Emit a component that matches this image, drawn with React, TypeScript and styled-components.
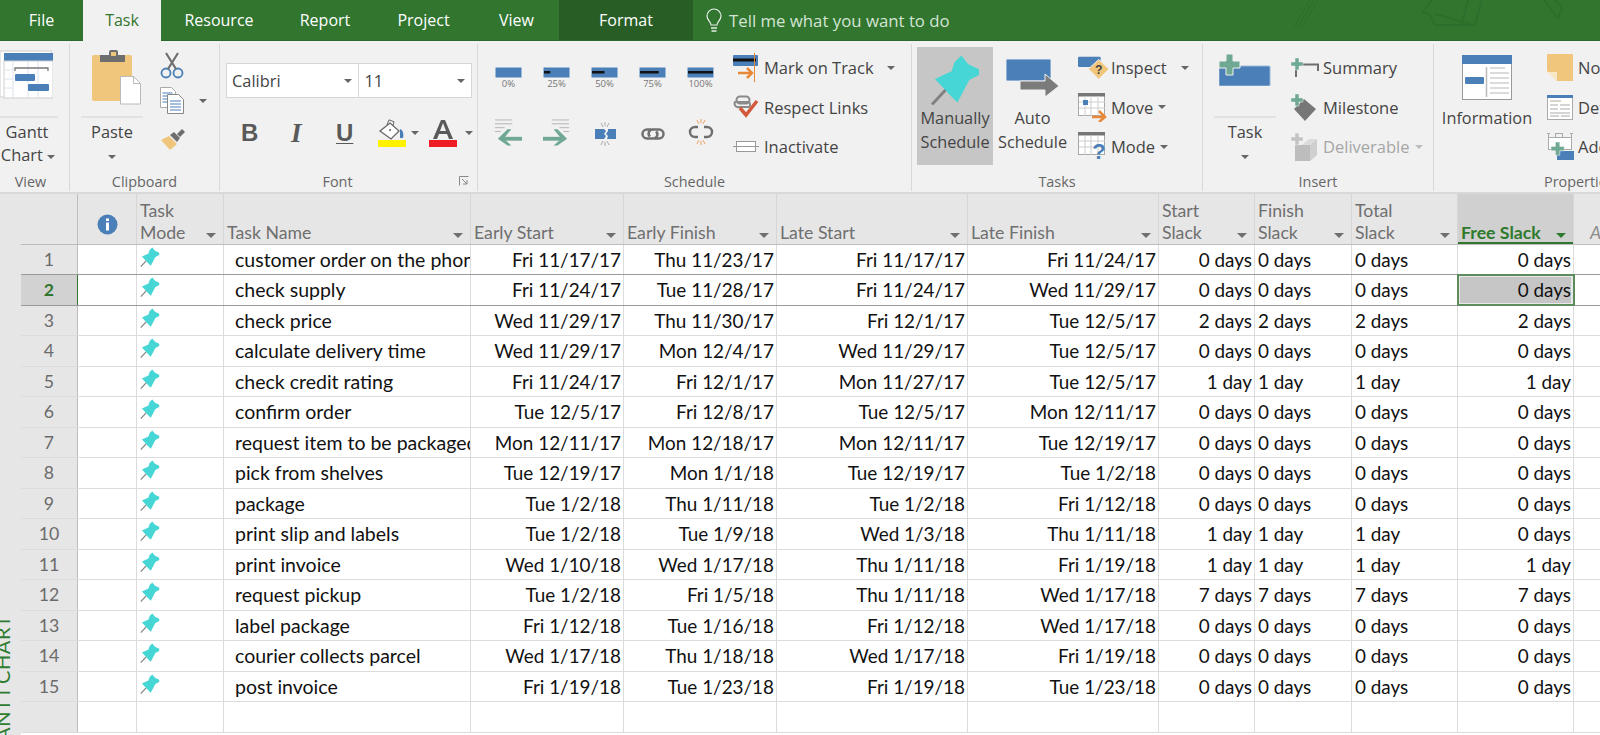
import React from "react";
import styled, { createGlobalStyle } from "styled-components";

const Global = createGlobalStyle`
  html, body { margin: 0; padding: 0; background: #fff; }
  body { font-family: "Open Sans", "Liberation Sans", sans-serif; }
`;

const GREEN = "#31752f";
const BLUE = "#4a7fb8";
const TEAL = "#47d6d6";
const SAGE = "#6fa893";
const ORANGE = "#e8893a";
const COLS = "57px 59px 87px 247px 153px 153px 191px 191px 96px 97px 106px 116px 27px";

const Page = styled.div`
  width: 1600px;
  height: 735px;
  overflow: hidden;
  display: flex;
  flex-direction: column;
  background: #fff;
`;

/* ---------- tab bar ---------- */
const TabBar = styled.div`
  position: relative;
  flex: none;
  height: 41px;
  display: flex;
  background: ${GREEN};
  border-bottom: 1px solid #2c6a2b;
  box-sizing: border-box;
`;
const Tab = styled.div<{ $w: number; $active?: boolean; $ctx?: boolean }>`
  width: ${(p) => p.$w}px;
  flex: none;
  display: flex;
  align-items: center;
  justify-content: center;
  font-size: 16px;
  box-sizing: border-box;
  color: ${(p) => (p.$active ? GREEN : "#fff")};
  background: ${(p) => (p.$active ? "#f1f1f1" : p.$ctx ? "#285e25" : "transparent")};
  height: ${(p) => (p.$active ? "42px" : "40px")};
  padding-bottom: ${(p) => (p.$active ? "2px" : "0")};
  position: relative;
`;
const TellMe = styled.div`
  display: flex;
  align-items: center;
  gap: 7px;
  margin-left: 13px;
  color: #d5e4d4;
  font-size: 16.8px;
  padding-top: 1px;
`;
const Decor = styled.svg`
  position: absolute;
  right: 0;
  top: 0;
`;

/* ---------- ribbon ---------- */
const Ribbon = styled.div`
  flex: none;
  height: 153px;
  box-sizing: border-box;
  display: flex;
  background: #f1f1f1;
  padding-top: 3px;
  border-bottom: 2px solid #d9d9d9;
  color: #444;
`;
const Group = styled.div<{ $w: number }>`
  flex: none;
  width: ${(p) => p.$w}px;
  box-sizing: border-box;
  border-right: 1px solid #d9d9d9;
  display: flex;
  flex-direction: column;
  margin-bottom: 1px;
`;
const GroupBody = styled.div<{ $pl?: number }>`
  flex: 1;
  min-height: 0;
  display: flex;
  padding-left: ${(p) => p.$pl ?? 0}px;
`;
const GroupLabel = styled.div<{ $pr?: number; $left?: number }>`
  flex: none;
  position: relative;
  height: 18px;
  line-height: 18px;
  text-align: ${(p) => (p.$left !== undefined ? "left" : "center")};
  padding-left: ${(p) => p.$left ?? 0}px;
  padding-right: ${(p) => p.$pr ?? 0}px;
  font-size: 14.4px;
  color: #666;
`;
const Launcher = styled.svg`
  position: absolute;
  right: 8px;
  top: 3px;
`;
const BigSplit = styled.div<{ $w: number }>`
  flex: none;
  width: ${(p) => p.$w}px;
  display: flex;
  flex-direction: column;
  align-items: center;
  font-size: 16.4px;
  line-height: 23px;
  text-align: center;
`;
const BigIconSlot = styled.div<{ $pb: number; $pl?: number; $pr?: number }>`
  flex: none;
  height: 74px;
  width: 100%;
  display: flex;
  justify-content: center;
  align-items: flex-end;
  padding: 0 ${(p) => p.$pr ?? 0}px ${(p) => p.$pb}px ${(p) => p.$pl ?? 0}px;
  box-sizing: border-box;
  border-bottom: 2px solid #e2e2e2;
`;
const BigText = styled.div<{ $pt?: number; $shift?: number }>`
  flex: none;
  padding-top: ${(p) => p.$pt ?? 0}px;
  white-space: nowrap;
  margin-right: ${(p) => p.$shift ?? 0}px;
`;
const DropDown = styled.span<{ $c?: string; $ml?: number }>`
  display: inline-block;
  flex: none;
  width: 0;
  height: 0;
  border-left: 4px solid transparent;
  border-right: 4px solid transparent;
  border-top: 4px solid ${(p) => p.$c ?? "#666"};
  vertical-align: middle;
  margin-left: ${(p) => p.$ml ?? 0}px;
`;
const BigDrop = styled.div`
  flex: none;
  line-height: 23px;
`;
const BigButton = styled.div<{ $w: number; $on?: boolean }>`
  flex: none;
  width: ${(p) => p.$w}px;
  height: 118px;
  margin-top: 3px;
  display: flex;
  flex-direction: column;
  align-items: center;
  background: ${(p) => (p.$on ? "#c6c6c6" : "transparent")};
  font-size: 16.3px;
  line-height: 24px;
  text-align: center;
  white-space: nowrap;
`;
const BigButtonIcon = styled.div<{ $h: number; $pt: number }>`
  flex: none;
  height: ${(p) => p.$h}px;
  padding-top: ${(p) => p.$pt}px;
`;
const CmdColumn = styled.div<{ $ml: number }>`
  flex: none;
  margin-left: ${(p) => p.$ml}px;
  padding-top: 4px;
  display: flex;
  flex-direction: column;
`;
const Cmd = styled.div<{ $off?: boolean }>`
  flex: none;
  height: 39.5px;
  display: flex;
  align-items: center;
  font-size: 16.5px;
  white-space: nowrap;
  color: ${(p) => (p.$off ? "#a6a6a6" : "#444")};
`;
const CmdIcon = styled.div<{ $w: number }>`
  flex: none;
  width: ${(p) => p.$w}px;
  display: flex;
  align-items: center;
`;
const ProgressGrid = styled.div`
  flex: none;
  width: 238px;
  margin-left: 17px;
  display: grid;
  grid-template-columns: repeat(5, 27px);
  column-gap: 21px;
  grid-template-rows: 49px 60px;
  padding-top: 23px;
  align-items: start;
`;
const Progress = styled.div`
  display: flex;
  flex-direction: column;
  align-items: center;
  font-size: 9.5px;
  line-height: 11px;
  color: #777;
  white-space: nowrap;
`;
const GlyphCell = styled.div`
  padding-top: 3px;
  display: flex;
  justify-content: center;
`;
const FontPanel = styled.div`
  display: flex;
  flex-direction: column;
  padding: 19px 0 0 6px;
`;
const ComboRow = styled.div`
  flex: none;
  display: flex;
  height: 35px;
  background: #fff;
  width: 246px;
  box-sizing: border-box;
  border: 1px solid #d6d6d6;
`;
const Combo = styled.div<{ $w: number }>`
  width: ${(p) => p.$w}px;
  box-sizing: border-box;
  display: flex;
  align-items: center;
  justify-content: space-between;
  padding: 0 6px 0 5px;
  font-size: 16.4px;
  color: #444;
  border-right: 1px solid #d6d6d6;
  &:last-child { border-right: 0; }
`;
const FormatRow = styled.div`
  flex: none;
  display: flex;
  align-items: center;
  height: 28px;
  margin-top: 21px;
  padding-left: 15px;
`;
const FormatGlyph = styled.span<{ $w: number; $i?: boolean; $u?: boolean }>`
  width: ${(p) => p.$w}px;
  flex: none;
  font-family: ${(p) => (p.$i ? '"Liberation Serif", serif' : '"Liberation Sans", sans-serif')};
  font-size: ${(p) => (p.$i ? 27 : 24)}px;
  line-height: 24px;
  color: #595959;
  font-weight: 700;
  font-style: ${(p) => (p.$i ? "italic" : "normal")};
  text-decoration: ${(p) => (p.$u ? "underline" : "none")};
  text-underline-offset: 2px;
  text-decoration-thickness: 1px;
`;
const Swatch = styled.div<{ $w: number; $ml?: number }>`
  width: ${(p) => p.$w}px;
  margin-left: ${(p) => p.$ml ?? 0}px;
  flex: none;
  display: flex;
  align-items: center;
`;
const ClipColumn = styled.div`
  flex: none;
  margin-left: 17px;
  padding-top: 8px;
  display: flex;
  flex-direction: column;
  gap: 8px;
`;
const ClipItem = styled.div<{ $mt?: number }>`
  flex: none;
  display: flex;
  align-items: center;
  gap: 15px;
  height: 27px;
  margin-top: ${(p) => p.$mt ?? 0}px;
`;

/* ---------- sheet ---------- */
const Sheet = styled.div`
  flex: 1;
  min-height: 0;
  display: flex;
`;
const Rail = styled.div`
  flex: none;
  width: 21px;
  background: #e6e6e6;
  overflow: hidden;
  position: relative;
`;
const RailText = styled.div`
  position: absolute;
  left: -8px;
  top: 402px;
  height: 160px;
  writing-mode: vertical-rl;
  transform: rotate(180deg);
  font-family: "Lato", sans-serif;
  font-size: 20px;
  line-height: 20px;
  letter-spacing: 0.6px;
  word-spacing: -3px;
  color: #2f7d2f;
  white-space: nowrap;
`;
const Grid = styled.div`
  flex: none;
  width: 1579px;
`;
const HeaderRow = styled.div`
  display: grid;
  grid-template-columns: ${COLS};
  height: 50px;
  background: #e6e6e6;
  border-bottom: 1px solid #bdbdbd;
`;
const HeadCell = styled.div<{ $sel?: boolean }>`
  display: flex;
  align-items: flex-end;
  justify-content: space-between;
  padding: 0 7px 0 3px;
  min-width: 0;
  overflow: hidden;
  box-sizing: border-box;
  border-right: 1px solid #d6d6d6;
  background: ${(p) => (p.$sel ? "#d0d0d0" : "transparent")};
  box-shadow: ${(p) => (p.$sel ? `inset 0 -2px 0 ${GREEN}` : "none")};
  font-family: "Lato", sans-serif;
  font-size: 17.7px;
  line-height: 22px;
  color: ${(p) => (p.$sel ? "#2e7a2c" : "#6f6f6f")};
  font-weight: ${(p) => (p.$sel ? 700 : 400)};
`;
const HeadLabel = styled.span`
  white-space: pre-line;
`;
const Arrow = styled.span`
  flex: none;
  width: 0;
  height: 0;
  margin-bottom: 6px;
  border-left: 5px solid transparent;
  border-right: 5px solid transparent;
  border-top: 5px solid currentColor;
`;
const GhostHead = styled.div`
  display: flex;
  align-items: flex-end;
  padding: 0 0 0 16px;
  overflow: hidden;
  white-space: nowrap;
  font-family: "Lato", sans-serif;
  font-style: italic;
  font-size: 17.7px;
  line-height: 22px;
  color: #8c8c8c;
`;
const InfoSlot = styled.div`
  display: flex;
  align-items: center;
  justify-content: center;
  padding-top: 10px;
  box-sizing: border-box;
  border-right: 1px solid #d6d6d6;
`;
const HeadBlank = styled.div`
  border-right: 1px solid #bdbdbd;
`;
const Row = styled.div<{ $cur?: boolean }>`
  position: relative;
  display: grid;
  grid-template-columns: ${COLS};
  height: 30.48px;
  box-sizing: border-box;
  border-bottom: 1px solid ${(p) => (p.$cur ? "#9a9a9a" : "#dcdcdc")};
  ${(p) => (p.$cur ? "box-shadow: 0 -1px 0 #9a9a9a;" : "")}
`;
const NumCell = styled.div<{ $cur?: boolean }>`
  background: ${(p) => (p.$cur ? "#d2d2d2" : "#e6e6e6")};
  color: ${(p) => (p.$cur ? GREEN : "#6b6b6b")};
  font-weight: ${(p) => (p.$cur ? 700 : 400)};
  font-family: "Lato", sans-serif;
  font-size: 17.7px;
  text-align: center;
  line-height: 29px;
  border-right: ${(p) => (p.$cur ? `1px solid ${GREEN}` : "1px solid #bdbdbd")};
  box-sizing: border-box;
`;
const Cell = styled.div<{ $align?: string; $indent?: number; $sel?: boolean; $size?: number }>`
  min-width: 0;
  overflow: hidden;
  white-space: nowrap;
  box-sizing: border-box;
  border-right: 1px solid #dcdcdc;
  font-family: "Lato", sans-serif;
  font-size: ${(p) => p.$size ?? 18.9}px;
  line-height: 29px;
  color: #111;
  text-align: ${(p) => p.$align ?? "right"};
  padding: 0 2px 0 ${(p) => p.$indent ?? 3}px;
  ${(p) => (p.$sel ? `
    background: #c6c6c6;
    outline: 2px solid #5d8c5d;
    outline-offset: -1px;
    box-shadow: inset 0 0 0 2px #e9e9e9;
    position: relative;
  ` : "")}
`;
const ModeCell = styled.div`
  padding: 2px 0 0 3px;
  box-sizing: border-box;
  border-right: 1px solid #dcdcdc;
`;

/* ---------- icons ---------- */
const PIN_BODY = "M30 0 37 9 48 14 48 20 38 25 26 48 20 42 3 24 20 16 23 7Z";
const Pin = ({ w, h }: { w: number; h: number }) => (
  <svg width={w} height={h} viewBox="-1 -1 50 52">
    <path d="M0 50 14 35" stroke="#808080" strokeWidth="3" fill="none" />
    <path d={PIN_BODY} fill={TEAL} />
  </svg>
);
const GanttIcon = () => (
  <svg width="53" height="49" viewBox="0 0 53 49">
    <rect x="0" y="1" width="51" height="46" fill="#fff" stroke="#d0d0d0" />
    <rect x="4" y="3" width="49" height="8" fill={BLUE} />
    <rect x="4" y="11" width="49" height="37" fill="#fff" stroke="#cfcfcf" />
    <path d="M13 11v37M28 11v37M38 11v37M4 20h9M4 29h9M4 38h9" stroke="#dbe4ee" fill="none" />
    <path d="M15 21v-3h33v3" stroke="#777" strokeWidth="1.3" fill="none" />
    <rect x="15" y="24" width="20" height="7" rx="1" fill={BLUE} />
    <rect x="28" y="34" width="21" height="7" rx="1" fill={BLUE} />
  </svg>
);
const PasteIcon = () => (
  <svg width="50" height="56" viewBox="0 0 50 56">
    <rect x="0" y="6" width="40" height="46" rx="2" fill="#efc67c" />
    <path d="M8 6h9V3a2 2 0 0 1 2-2h5a2 2 0 0 1 2 2v3h7v7H8Z" fill="#6e6e6e" />
    <rect x="19" y="3" width="5" height="4" fill="#efc67c" />
    <path d="M28.5 27.5h13l7 7v20.5h-20Z" fill="#fff" stroke="#bbb" />
    <path d="M41.500 27.500v7h7" fill="none" stroke="#bbb" />
  </svg>
);
const ScissorsIcon = () => (
  <svg width="24" height="27" viewBox="0 0 24 27">
    <circle cx="6" cy="21" r="4.500" fill="none" stroke={BLUE} strokeWidth="1.800" />
    <circle cx="18" cy="21" r="4.500" fill="none" stroke={BLUE} strokeWidth="1.800" />
    <path d="M8 17 18 1M16 17 6 1" stroke="#6e6e6e" strokeWidth="2.200" fill="none" />
  </svg>
);
const CopyIcon = () => (
  <svg width="24" height="27" viewBox="0 0 24 27">
    <path d="M.5.500h11l4 4v16H.5Z" fill="#fff" stroke="#aaa" />
    <path d="M2.500 6h10M2.500 9h10M2.500 12h10M2.500 15h10" stroke={BLUE} />
    <path d="M7.500 7.500h11l5 5v14h-16Z" fill="#fff" stroke="#888" />
    <path d="M10 14h11M10 17h11M10 20h11M10 23h11" stroke={BLUE} />
  </svg>
);
const BrushIcon = () => (
  <svg width="26" height="22" viewBox="0 0 26 22">
    <path d="M9 7 17 15 10 21 1 11Z" fill="#efc67c" />
    <path d="M10 6 14 3 20 9 17 13Z" fill="#6e6e6e" />
    <path d="M17 5 22 0 25 3 20 8Z" fill="#6e6e6e" />
  </svg>
);
const FillIcon = () => (
  <svg width="30" height="28" viewBox="0 0 30 28">
    <path d="M3 12 13 4 22 12 14 20Z" fill="#fff" stroke="#666" strokeWidth="1.300" />
    <path d="M10 6 12 0.800l5 2-1 4" fill="none" stroke="#666" />
    <circle cx="13" cy="11" r="1" fill="#666" />
    <path d="M23 10c3 1 4 5 3 9h-3Z" fill={BLUE} />
    <rect x="1" y="21" width="28" height="7" fill="#fff200" />
  </svg>
);
const FontColorIcon = () => (
  <svg width="30" height="28" viewBox="0 0 30 28">
    <path d="M5 20 13 1h4l8 19h-4l-2-5h-8l-2 5Zm7-8h6l-3-8Z" fill="#595959" />
    <rect x="1" y="21" width="28" height="7" fill="#ee1c25" />
  </svg>
);
const Bar = ({ pct }: { pct: number }) => (
  <svg width="27" height="11" viewBox="0 0 27 11">
    <rect x=".5" y=".5" width="26" height="10" rx="1" fill={BLUE} stroke="#9db9d6" />
    {pct > 0 && <rect x="1" y="4" width={25 * pct} height="2.500" fill="#111" />}
  </svg>
);
const ArrowGlyph = ({ dir }: { dir: "l" | "r" }) => (
  <svg width="28" height="27" viewBox="0 0 28 27">
    <g stroke="#b4b4b4" fill="none">
      {dir === "l"
        ? <path d="M0 .500h18M0 4.500h18M0 8.500h10M0 12.500h6" />
        : <path d="M9 .500h18M9 4.500h18M17 8.500h10M21 12.500h6" />}
    </g>
    <g transform={dir === "l" ? "" : "translate(28 0) scale(-1 1)"}>
      <path d="M8 18h20v4H8Z" fill={SAGE} />
      <path d="M13 10 3 20 13 27h4l-8-7 8-10Z" fill={SAGE} />
    </g>
  </svg>
);
const SplitTask = () => (
  <svg width="24" height="24" viewBox="0 0 24 24" style={{ marginTop: 3 }}>
    <path d="M2 7h9l2 2-2 3 2 2-2 3H2Z M15 7h8v10h-9l1-3-2-2 2-3Z" fill={BLUE} />
    <path d="M8 1l2 4M16 1l-2 4M12 0v4M8 23l2-4M16 23l-2-4M12 24v-4" stroke="#aaa" fill="none" />
  </svg>
);
const LinkIcon = () => (
  <svg width="24" height="14" viewBox="0 0 24 14" style={{ marginTop: 8 }}>
    <path d="M10 2.500H6a4.500 4.500 0 0 0 0 9h6a4 4 0 0 0 3-7" fill="none" stroke="#707070" strokeWidth="2.500" />
    <path d="M14 11.500h4a4.500 4.500 0 0 0 0-9h-6a4 4 0 0 0-3 7" fill="none" stroke="#707070" strokeWidth="2.500" />
  </svg>
);
const UnlinkIcon = () => (
  <svg width="26" height="26" viewBox="0 0 26 26">
    <path d="M10 8H7a5 5 0 0 0 0 10h3M16 8h3a5 5 0 0 1 0 10h-3" fill="none" stroke="#707070" strokeWidth="2.500" />
    <path d="M9 1l2 4M17 1l-2 4M13 0v4M9 25l2-4M17 25l-2-4M13 26v-4" stroke={ORANGE} fill="none" opacity=".75" />
  </svg>
);
const MarkTrack = () => (
  <svg width="26" height="29" viewBox="0 0 26 29">
    <rect x="0" y="2" width="25" height="11" rx="1" fill={BLUE} />
    <rect x="0" y="5.500" width="23" height="3" fill="#111" />
    <path d="M21.500 0v29" stroke={ORANGE} />
    <path d="M5 20h13" stroke={ORANGE} strokeWidth="2.500" />
    <path d="M14 15l5 5-5 5" stroke={ORANGE} strokeWidth="2.500" fill="none" />
  </svg>
);
const RespectIcon = () => (
  <svg width="26" height="24" viewBox="0 0 26 24">
    <path d="M7 1.500h6a3.500 3.500 0 0 1 0 7H7a3.500 3.500 0 0 1 0-7Z" fill="none" stroke="#8a8a8a" strokeWidth="2" />
    <path d="M2 7h14a3.500 3.500 0 0 1 0 5H6A3.500 3.500 0 0 1 2 7Z" fill="none" stroke="#8a8a8a" strokeWidth="2" />
    <path d="M7 13l6 7L24 6" fill="none" stroke="#d4583a" strokeWidth="3.500" />
  </svg>
);
const InactIcon = () => (
  <svg width="26" height="11" viewBox="0 0 26 11">
    <rect x="3.500" y=".5" width="19" height="10" fill="#fff" stroke="#999" />
    <path d="M0 5.500h26" stroke="#999" />
  </svg>
);
const AutoIcon = () => (
  <svg width="53" height="38" viewBox="0 0 53 38">
    <rect x=".5" y=".5" width="44" height="21" rx="1" fill={BLUE} stroke="#8fb0d3" />
    <path d="M14 22h25V15l14 12-14 11v-7H14Z" fill="#7b7b7b" stroke="#f1f1f1" strokeWidth="1" />
  </svg>
);
const InspectIcon = () => (
  <svg width="35" height="24" viewBox="0 0 35 24">
    <rect x="0" y="0" width="24" height="11" rx="1" fill={BLUE} />
    <path d="M22 3 33 13 22 24 11 13Z" fill="#efc67c" stroke="#f1f1f1" />
    <text x="22" y="18" textAnchor="middle" fontSize="13" fontWeight="700" fontFamily="Liberation Sans" fill="#444">?</text>
  </svg>
);
const CalIcon = ({ kind }: { kind: "move" | "mode" }) => (
  <svg width="30" height="29" viewBox="0 0 30 29">
    <rect x=".5" y=".5" width="26" height="22" fill="#fff" stroke="#a8a8a8" />
    <rect x="0" y="0" width="27" height="3.500" fill="#777" />
    <path d="M7 3v20M13 3v20M20 3v20M1 9h26M1 15h26" stroke="#cfcfcf" fill="none" />
    {kind === "move" && <rect x="5" y="7" width="5" height="5" fill={BLUE} />}
    {kind === "move" && <path d="M14 24h12M21 18l6 6-6 5" stroke={ORANGE} strokeWidth="2.500" fill="none" />}
    {kind === "mode" && <text x="21" y="27" textAnchor="middle" fontSize="22" fontWeight="700" fontFamily="Liberation Sans" fill={BLUE}>?</text>}
  </svg>
);
const TaskAddIcon = () => (
  <svg width="52" height="32" viewBox="0 0 52 32">
    <rect x="0" y="12" width="51" height="20" rx="1" fill={BLUE} stroke="#9db9d6" />
    <path d="M7 0h7v7h7v7h-7v7H7v-7H0V7h7Z" fill={SAGE} stroke="#f1f1f1" />
  </svg>
);
const Plus = ({ c = SAGE }: { c?: string }) => (
  <path d="M4 0h4v4h4v4H8v4H4V8H0V4h4Z" fill={c} stroke="#f1f1f1" strokeWidth=".5" />
);
const SummaryIcon = () => (
  <svg width="28" height="20" viewBox="0 0 28 20">
    <path d="M8 6.500h19V13" stroke="#6e6e6e" strokeWidth="2" fill="none" />
    <path d="M5 12v7" stroke="#6e6e6e" strokeWidth="2" />
    <Plus />
  </svg>
);
const MilestoneIcon = () => (
  <svg width="26" height="27" viewBox="0 0 26 27">
    <path d="M13 5 25 15 14 27 3 15Z" fill="#777" />
    <Plus />
  </svg>
);
const DeliverIcon = () => (
  <svg width="27" height="28" viewBox="0 0 27 28">
    <path d="M4 12h15v16H4Z" fill="#bdbdbd" />
    <path d="M19 12l7-6v16l-7 6Z" fill="#cfcfcf" />
    <path d="M11 12l7-6h8l-7 6Z" fill="#dcdcdc" />
    <Plus c="#c4c4c4" />
  </svg>
);
const InfoIcon = () => (
  <svg width="50" height="46" viewBox="0 0 50 46">
    <rect x=".5" y=".5" width="49" height="44" fill="#fff" stroke="#9a9a9a" />
    <rect x="0" y="0" width="50" height="9" fill={BLUE} />
    <path d="M24.500 12v30" stroke="#bbb" strokeWidth="1.500" />
    <rect x="3" y="22" width="19" height="7" rx="1" fill={BLUE} />
    <path d="M28 13h15M28 18h19M28 23h19M28 28h19M28 33h19M28 38h19" stroke="#d0d0d0" strokeWidth="1.300" />
  </svg>
);
const NoteIcon = () => (
  <svg width="27" height="28" viewBox="0 0 27 28">
    <path d="M0 0h26v27H10L0 17Z" fill="#efc67c" />
    <path d="M0 18h10v9Z" fill="#f7e8c8" />
  </svg>
);
const DetailIcon = () => (
  <svg width="27" height="25" viewBox="0 0 27 25">
    <rect x=".5" y=".5" width="25" height="24" fill="#fff" stroke="#aaa" />
    <rect x="0" y="0" width="26" height="3" fill={BLUE} />
    <path d="M3 6h11M3 10h8M13 10h10M3 14h8M13 14h10M3 18h20M3 21h9M14 21h9" stroke="#aaa" />
  </svg>
);
const AddIcon = () => (
  <svg width="27" height="27" viewBox="0 0 27 27">
    <path d="M0 .500h3M9 .500h7M23 .500h3M1.500 0v4M8.500 0v4M15.500 0v4M24.500 0v4" stroke="#aaa" fill="none" />
    <rect x="1.500" y="4.500" width="23" height="12" fill="#fff" stroke="#aaa" />
    <rect x="10" y="18" width="17" height="9" fill={BLUE} />
    <path transform="translate(4 9) scale(1.100)" d="M4 0h4v4h4v4H8v4H4V8H0V4h4Z" fill={SAGE} stroke="#f1f1f1" strokeWidth=".5" />
  </svg>
);
const Bulb = () => (
  <svg width="16" height="26" viewBox="0 0 16 26">
    <path d="M5 17c0-3-4-5-4-9a7 7 0 0 1 14 0c0 4-4 6-4 9Z" fill="none" stroke="#e8efe8" strokeWidth="1.200" />
    <path d="M5 20h6M5.500 23h5" stroke="#e8efe8" strokeWidth="1.300" />
  </svg>
);
const InfoBadge = () => (
  <svg width="21" height="21" viewBox="0 0 21 21">
    <circle cx="10.500" cy="10.500" r="10" fill={BLUE} />
    <rect x="9" y="8.500" width="3" height="8" fill="#fff" />
    <rect x="9" y="4.500" width="3" height="2.500" fill="#fff" />
  </svg>
);

/* ---------- data ---------- */
type TaskRow = [string, string, string, string, string, string, string, string, string];
const d0 = "0 days", d1 = "1 day", d2 = "2 days", d7 = "7 days";
const tasks: TaskRow[] = [
  ["customer order on the phone", "Fri 11/17/17", "Thu 11/23/17", "Fri 11/17/17", "Fri 11/24/17", d0, d0, d0, d0],
  ["check supply", "Fri 11/24/17", "Tue 11/28/17", "Fri 11/24/17", "Wed 11/29/17", d0, d0, d0, d0],
  ["check price", "Wed 11/29/17", "Thu 11/30/17", "Fri 12/1/17", "Tue 12/5/17", d2, d2, d2, d2],
  ["calculate delivery time", "Wed 11/29/17", "Mon 12/4/17", "Wed 11/29/17", "Tue 12/5/17", d0, d0, d0, d0],
  ["check credit rating", "Fri 11/24/17", "Fri 12/1/17", "Mon 11/27/17", "Tue 12/5/17", d1, d1, d1, d1],
  ["confirm order", "Tue 12/5/17", "Fri 12/8/17", "Tue 12/5/17", "Mon 12/11/17", d0, d0, d0, d0],
  ["request item to be packaged", "Mon 12/11/17", "Mon 12/18/17", "Mon 12/11/17", "Tue 12/19/17", d0, d0, d0, d0],
  ["pick from shelves", "Tue 12/19/17", "Mon 1/1/18", "Tue 12/19/17", "Tue 1/2/18", d0, d0, d0, d0],
  ["package", "Tue 1/2/18", "Thu 1/11/18", "Tue 1/2/18", "Fri 1/12/18", d0, d0, d0, d0],
  ["print slip and labels", "Tue 1/2/18", "Tue 1/9/18", "Wed 1/3/18", "Thu 1/11/18", d1, d1, d1, d0],
  ["print invoice", "Wed 1/10/18", "Wed 1/17/18", "Thu 1/11/18", "Fri 1/19/18", d1, d1, d1, d1],
  ["request pickup", "Tue 1/2/18", "Fri 1/5/18", "Thu 1/11/18", "Wed 1/17/18", d7, d7, d7, d7],
  ["label package", "Fri 1/12/18", "Tue 1/16/18", "Fri 1/12/18", "Wed 1/17/18", d0, d0, d0, d0],
  ["courier collects parcel", "Wed 1/17/18", "Thu 1/18/18", "Wed 1/17/18", "Fri 1/19/18", d0, d0, d0, d0],
  ["post invoice", "Fri 1/19/18", "Tue 1/23/18", "Fri 1/19/18", "Tue 1/23/18", d0, d0, d0, d0],
];
const headers = ["Task\nMode", "Task Name", "Early Start", "Early Finish", "Late Start", "Late Finish", "Start\nSlack", "Finish\nSlack", "Total\nSlack"];

export default function App() {
  return (
    <Page>
      <Global />
      <TabBar>
        <Tab $w={83}>File</Tab>
        <Tab $w={78} $active>Task</Tab>
        <Tab $w={116}>Resource</Tab>
        <Tab $w={96}>Report</Tab>
        <Tab $w={101}>Project</Tab>
        <Tab $w={85}>View</Tab>
        <Tab $w={134} $ctx>Format</Tab>
        <TellMe><Bulb />Tell me what you want to do</TellMe>
        <Decor width="330" height="40" viewBox="0 0 330 40" fill="none" stroke="#2d6e2c" strokeWidth="2">
          <path d="M24 27 40 0M28 27 44 0M32 27 48 0" strokeWidth="1" />
          <path d="M162 0 153 12 160 15 165 25 205 25 212 0M205 25 198 25" />
          <path d="M165 14 200 24M198 0 192 24" />
          <path d="M274 0 288 18 292 8 285 0" />
        </Decor>
      </TabBar>

      <Ribbon>
        <Group $w={70}>
          <GroupBody>
            <BigSplit $w={58}>
              <BigIconSlot $pb={17} $pr={5}><GanttIcon /></BigIconSlot>
              <BigText $pt={2} $shift={4}>Gantt</BigText>
              <BigText $shift={2}>Chart <DropDown /></BigText>
            </BigSplit>
          </GroupBody>
          <GroupLabel $pr={8}>View</GroupLabel>
        </Group>

        <Group $w={150}>
          <GroupBody $pl={11}>
            <BigSplit $w={62}>
              <BigIconSlot $pb={11} $pl={10}><PasteIcon /></BigIconSlot>
              <BigText $pt={2}>Paste</BigText>
              <BigDrop><DropDown /></BigDrop>
            </BigSplit>
            <ClipColumn>
              <ClipItem><ScissorsIcon /></ClipItem>
              <ClipItem><CopyIcon /><DropDown /></ClipItem>
              <ClipItem $mt={4}><BrushIcon /></ClipItem>
            </ClipColumn>
          </GroupBody>
          <GroupLabel>Clipboard</GroupLabel>
        </Group>

        <Group $w={258}>
          <GroupBody>
            <FontPanel>
              <ComboRow>
                <Combo $w={133}>Calibri <DropDown /></Combo>
                <Combo $w={112}>11 <DropDown /></Combo>
              </ComboRow>
              <FormatRow>
                <FormatGlyph $w={50}>B</FormatGlyph>
                <FormatGlyph $w={45} $i>I</FormatGlyph>
                <FormatGlyph $w={41} $u>U</FormatGlyph>
                <Swatch $w={34}><FillIcon /></Swatch>
                <DropDown />
                <Swatch $w={38} $ml={9}><FontColorIcon /></Swatch>
                <DropDown $ml={-1} />
              </FormatRow>
            </FontPanel>
          </GroupBody>
          <GroupLabel $pr={22}>
            Font
            <Launcher width="10" height="10" viewBox="0 0 10 10" fill="none" stroke="#888">
              <path d="M.5 9.500v-9h9M3 3l5 5M8 4v4H4" />
            </Launcher>
          </GroupLabel>
        </Group>

        <Group $w={434}>
          <GroupBody>
            <ProgressGrid>
              {[0, 0.25, 0.5, 0.75, 1].map((p) => (
                <Progress key={p}><Bar pct={p} />{p * 100}%</Progress>
              ))}
              <GlyphCell><ArrowGlyph dir="l" /></GlyphCell>
              <GlyphCell><ArrowGlyph dir="r" /></GlyphCell>
              <GlyphCell><SplitTask /></GlyphCell>
              <GlyphCell><LinkIcon /></GlyphCell>
              <GlyphCell><UnlinkIcon /></GlyphCell>
            </ProgressGrid>
            <CmdColumn $ml={0}>
              <Cmd><CmdIcon $w={31}><MarkTrack /></CmdIcon>Mark on Track<DropDown $ml={13} /></Cmd>
              <Cmd><CmdIcon $w={31}><RespectIcon /></CmdIcon>Respect Links</Cmd>
              <Cmd><CmdIcon $w={31}><InactIcon /></CmdIcon>Inactivate</Cmd>
            </CmdColumn>
          </GroupBody>
          <GroupLabel>Schedule</GroupLabel>
        </Group>

        <Group $w={291}>
          <GroupBody $pl={5}>
            <BigButton $w={76} $on>
              <BigButtonIcon $h={52} $pt={7}><Pin w={49} h={52} /></BigButtonIcon>
              Manually<br />Schedule
            </BigButton>
            <BigButton $w={79}>
              <BigButtonIcon $h={47} $pt={12}><AutoIcon /></BigButtonIcon>
              Auto<br />Schedule
            </BigButton>
            <CmdColumn $ml={6}>
              <Cmd><CmdIcon $w={33}><InspectIcon /></CmdIcon>Inspect<DropDown $ml={14} /></Cmd>
              <Cmd><CmdIcon $w={33}><CalIcon kind="move" /></CmdIcon>Move<DropDown $ml={5} /></Cmd>
              <Cmd><CmdIcon $w={33}><CalIcon kind="mode" /></CmdIcon>Mode<DropDown $ml={5} /></Cmd>
            </CmdColumn>
          </GroupBody>
          <GroupLabel>Tasks</GroupLabel>
        </Group>

        <Group $w={231}>
          <GroupBody $pl={11}>
            <BigSplit $w={62}>
              <BigIconSlot $pb={30}><TaskAddIcon /></BigIconSlot>
              <BigText $pt={2}>Task</BigText>
              <BigDrop><DropDown /></BigDrop>
            </BigSplit>
            <CmdColumn $ml={15}>
              <Cmd><CmdIcon $w={32}><SummaryIcon /></CmdIcon>Summary</Cmd>
              <Cmd><CmdIcon $w={32}><MilestoneIcon /></CmdIcon>Milestone</Cmd>
              <Cmd $off><CmdIcon $w={32}><DeliverIcon /></CmdIcon>Deliverable<DropDown $c="#bdbdbd" $ml={5} /></Cmd>
            </CmdColumn>
          </GroupBody>
          <GroupLabel>Insert</GroupLabel>
        </Group>

        <Group $w={300}>
          <GroupBody $pl={12}>
            <BigButton $w={82}>
              <BigButtonIcon $h={51} $pt={8}><InfoIcon /></BigButtonIcon>
              Information
            </BigButton>
            <CmdColumn $ml={19}>
              <Cmd><CmdIcon $w={31}><NoteIcon /></CmdIcon>Notes</Cmd>
              <Cmd><CmdIcon $w={31}><DetailIcon /></CmdIcon>Details</Cmd>
              <Cmd><CmdIcon $w={31}><AddIcon /></CmdIcon>Add to Timeline</Cmd>
            </CmdColumn>
          </GroupBody>
          <GroupLabel $left={110}>Properties</GroupLabel>
        </Group>
      </Ribbon>

      <Sheet>
        <Rail><RailText>GANTT CHART</RailText></Rail>
        <Grid>
          <HeaderRow>
            <HeadBlank />
            <InfoSlot><InfoBadge /></InfoSlot>
            {headers.map((h) => (
              <HeadCell key={h}><HeadLabel>{h}</HeadLabel><Arrow /></HeadCell>
            ))}
            <HeadCell $sel><HeadLabel>Free Slack</HeadLabel><Arrow /></HeadCell>
            <GhostHead>Add New Column</GhostHead>
          </HeaderRow>
          {tasks.map((t, i) => {
            const cur = i === 1;
            return (
              <Row key={t[0]} $cur={cur}>
                <NumCell $cur={cur}>{i + 1}</NumCell>
                <Cell />
                <ModeCell><Pin w={20} h={20} /></ModeCell>
                <Cell $align="left" $indent={11} $size={19.5}>{t[0]}</Cell>
                <Cell>{t[1]}</Cell>
                <Cell>{t[2]}</Cell>
                <Cell>{t[3]}</Cell>
                <Cell>{t[4]}</Cell>
                <Cell>{t[5]}</Cell>
                <Cell $align="left">{t[6]}</Cell>
                <Cell $align="left">{t[7]}</Cell>
                <Cell $sel={cur}>{t[8]}</Cell>
                <div />
              </Row>
            );
          })}
          <Row>
            <NumCell />
            <Cell /><ModeCell /><Cell /><Cell /><Cell /><Cell /><Cell /><Cell /><Cell /><Cell /><Cell />
            <div />
          </Row>
        </Grid>
      </Sheet>
    </Page>
  );
}
